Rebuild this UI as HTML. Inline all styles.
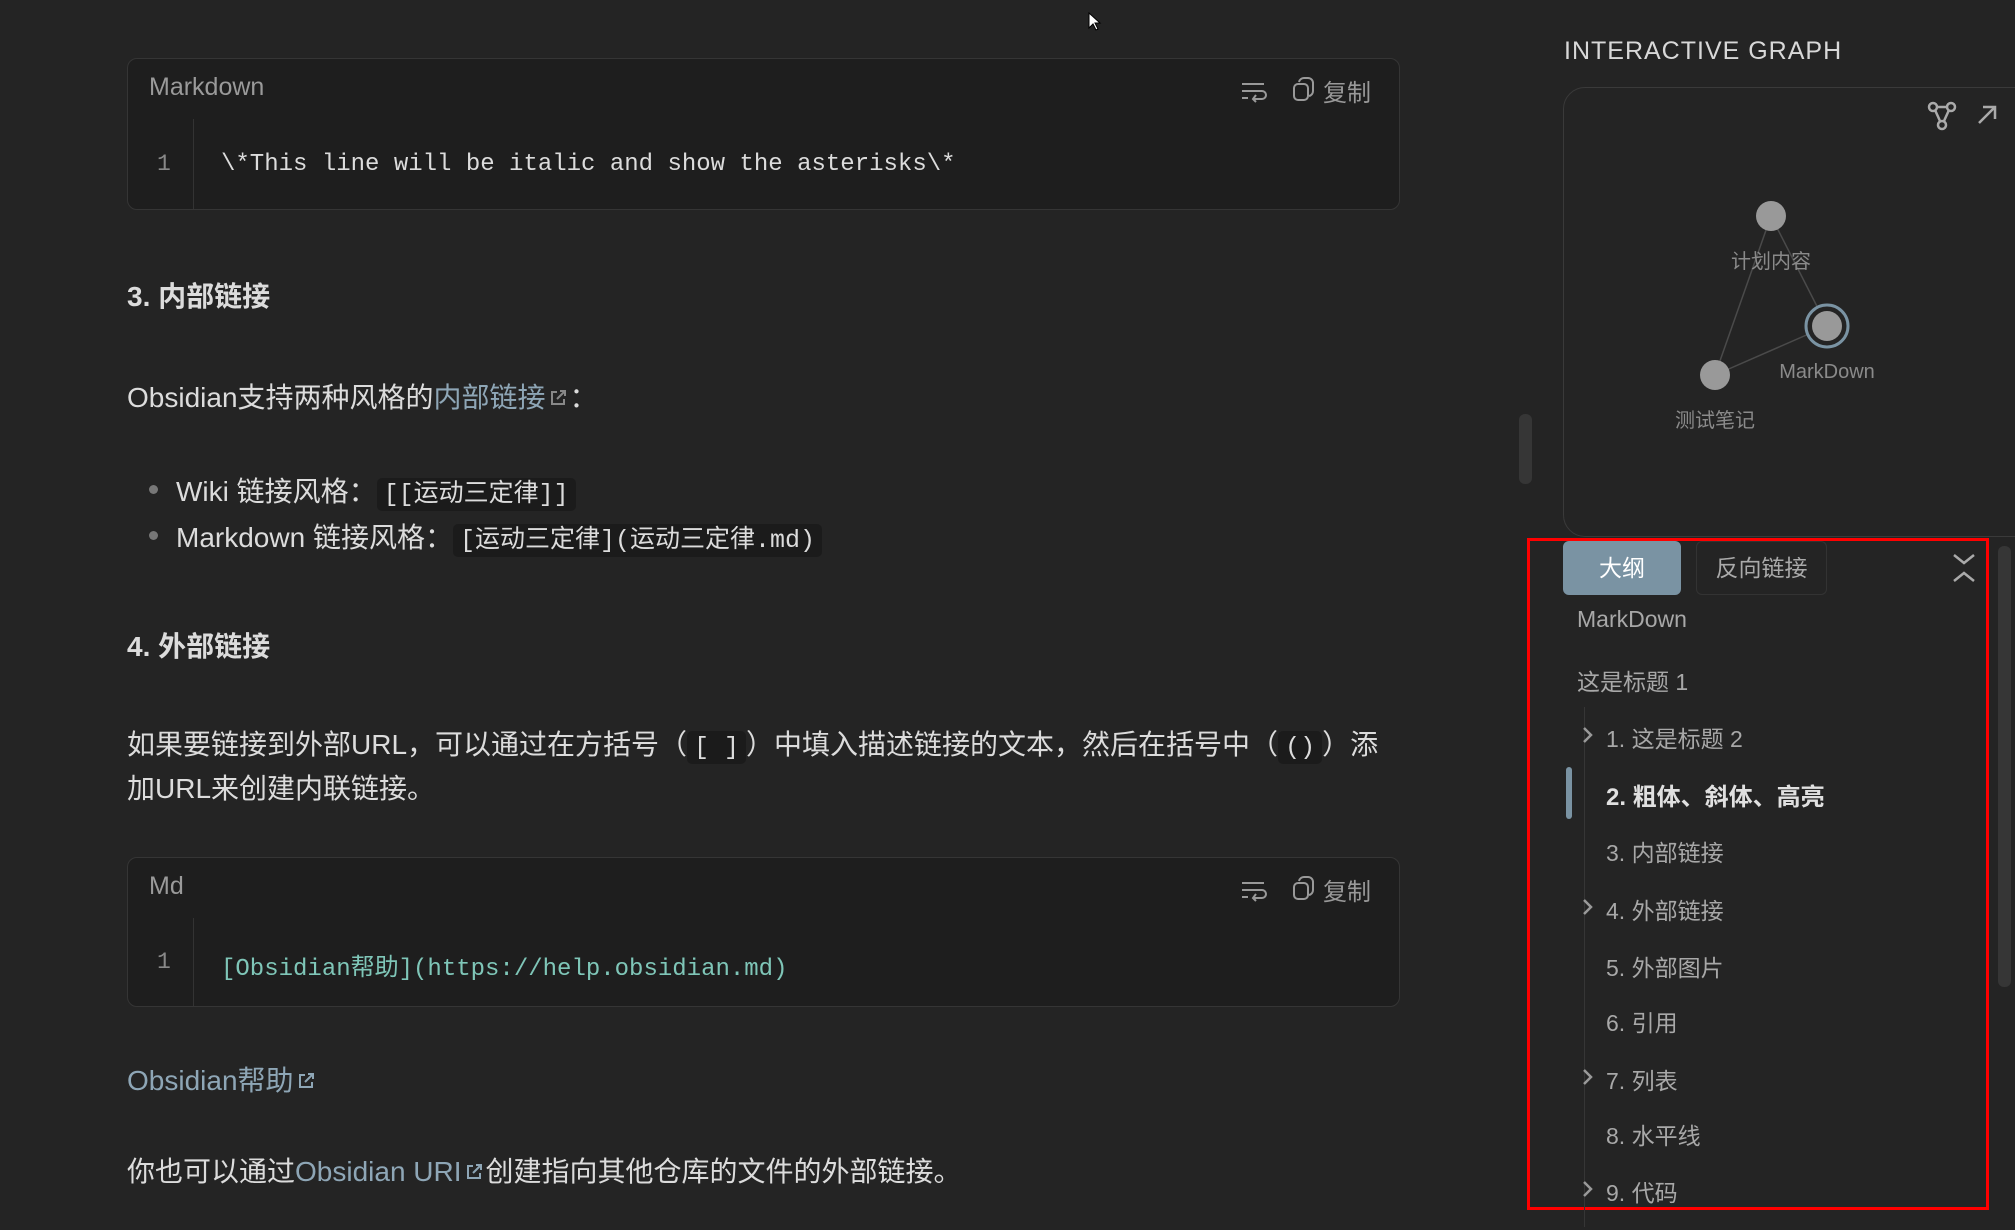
<!DOCTYPE html>
<html><head><meta charset="utf-8"><style>
*{margin:0;padding:0;box-sizing:border-box}
body{width:2015px;height:1230px;background:#242424;overflow:hidden;position:relative;font-family:"Liberation Sans","Noto Sans CJK SC",sans-serif;color:#dadada}
.a{position:absolute;white-space:nowrap}
.code{position:absolute;left:127px;width:1273px;background:#1e1e1e;border:1px solid #353535;border-radius:10px}
.lang{position:absolute;left:21px;font-size:25px;color:#9a9a9a}
.gut{position:absolute;left:65px;top:60px;bottom:0;border-left:1px solid #333}
.ln{position:absolute;left:29px;font-family:"Liberation Mono",monospace;font-size:23px;color:#888}
.ct{position:absolute;left:93px;font-family:"Liberation Mono","Noto Sans CJK SC",monospace;font-size:24px;color:#dcdcdc}
.cp{position:absolute;right:28px;font-size:24px;color:#999}
.body{font-size:28px;color:#dcdcdc}
.h{font-size:28px;font-weight:bold;color:#dcdcdc}
.lk{color:#8ea6b6}
.ic-code{background:#1b1b1b;font-family:"Liberation Mono","Noto Sans CJK SC",monospace;font-size:25px;padding:2px 7px;border-radius:5px}
.ol{position:absolute;font-size:23px;color:#a8a8a8;white-space:nowrap}
.chev{position:absolute;left:1581px}
</style></head><body>
<svg width="0" height="0" style="position:absolute"><defs><symbol id="ext" viewBox="0 0 20 20"><path d="M9 4H4v12h12v-5M12 3h5v5M17 3l-8 8" fill="none" stroke="currentColor" stroke-width="2"/></symbol><symbol id="chv" viewBox="0 0 14 20"><path d="M3 3l7 7-7 7" fill="none" stroke="#999" stroke-width="2.5"/></symbol></defs></svg>

<div class="code" style="top:58px;height:152px">
<div class="lang" style="top:14px">Markdown</div>
<svg class="a" style="left:1112px;top:20px" width="28" height="24" viewBox="0 0 28 24" fill="none" stroke="#999" stroke-width="2"><path d="M2 5h22M2 12h20a4 4 0 0 1 0 8h-8M2 19h6M16 16l-3 4 3 3"/></svg>
<svg class="a" style="left:1163px;top:16px" width="26" height="28" viewBox="0 0 26 28" fill="none" stroke="#999" stroke-width="2"><rect x="3" y="9" width="14" height="16" rx="4"/><path d="M8 7a5 5 0 0 1 5-4h4a5 5 0 0 1 5 5v8a5 5 0 0 1-4 5"/></svg>
<div class="cp" style="top:14px">复制</div>
<div class="gut"></div>
<div class="ln" style="top:92px">1</div>
<div class="ct" style="top:92px">\*This line will be italic and show the asterisks\*</div>
</div>

<div class="a h" style="left:127px;top:275px">3. 内部链接</div>
<div class="a body" style="left:127px;top:376px">Obsidian支持两种风格的<span class="lk">内部链接</span><svg width="20" height="20" style="color:#888;margin:0 2px;vertical-align:-1px"><use href="#ext"/></svg>：</div>
<div class="a" style="left:149px;top:485px;width:9px;height:9px;border-radius:50%;background:#777"></div>
<div class="a body" style="left:176px;top:470px">Wiki 链接风格：<span class="ic-code">[[运动三定律]]</span></div>
<div class="a" style="left:149px;top:531px;width:9px;height:9px;border-radius:50%;background:#777"></div>
<div class="a body" style="left:176px;top:516px">Markdown 链接风格：<span class="ic-code">[运动三定律](运动三定律.md)</span></div>

<div class="a h" style="left:127px;top:625px">4. 外部链接</div>
<div class="a body" style="left:127px;top:724px;line-height:41px">如果要链接到外部URL，可以通过在方括号（<span class="ic-code">[ ]</span>）中填入描述链接的文本，然后在括号中（<span class="ic-code">()</span>）添<br>加URL来创建内联链接。</div>

<div class="code" style="top:857px;height:150px">
<div class="lang" style="top:14px">Md</div>
<svg class="a" style="left:1112px;top:20px" width="28" height="24" viewBox="0 0 28 24" fill="none" stroke="#999" stroke-width="2"><path d="M2 5h22M2 12h20a4 4 0 0 1 0 8h-8M2 19h6M16 16l-3 4 3 3"/></svg>
<svg class="a" style="left:1163px;top:16px" width="26" height="28" viewBox="0 0 26 28" fill="none" stroke="#999" stroke-width="2"><rect x="3" y="9" width="14" height="16" rx="4"/><path d="M8 7a5 5 0 0 1 5-4h4a5 5 0 0 1 5 5v8a5 5 0 0 1-4 5"/></svg>
<div class="cp" style="top:14px">复制</div>
<div class="gut"></div>
<div class="ln" style="top:91px">1</div>
<div class="ct" style="top:89px;color:#7fc6b8">[Obsidian帮助](https://help.obsidian.md)</div>
</div>

<div class="a body lk" style="left:127px;top:1059px">Obsidian帮助<svg width="20" height="20" style="color:#8ea6b6;margin-left:2px;vertical-align:-1px"><use href="#ext"/></svg></div>
<div class="a body" style="left:127px;top:1150px">你也可以通过<span class="lk">Obsidian URI</span><svg width="20" height="20" style="color:#8ea6b6;margin:0 2px;vertical-align:-1px"><use href="#ext"/></svg>创建指向其他仓库的文件的外部链接。</div>

<svg class="a" style="left:1088px;top:12px" width="14" height="20" viewBox="0 0 14 20"><path d="M1 1v15l4-4 3 6 2-1-3-6h5z" fill="#fff" stroke="#000"/></svg>

<!-- right panel -->
<div class="a" style="left:1519px;top:414px;width:13px;height:70px;border-radius:6px;background:#363636"></div>
<div class="a" style="left:1564px;top:37px;font-size:25px;letter-spacing:1px;color:#d8d8d8">INTERACTIVE GRAPH</div>
<div class="a" style="left:1563px;top:87px;width:480px;height:450px;border:1px solid #3a3a3a;border-radius:22px"></div>
<svg class="a" style="left:1926px;top:100px" width="32" height="32" viewBox="0 0 32 32" fill="none" stroke="#aaa" stroke-width="2.5"><circle cx="7" cy="7" r="4"/><circle cx="25" cy="7" r="4"/><circle cx="16" cy="25" r="4"/><path d="M9 10l5 11M23 10l-5 11M11 7h10"/></svg>
<svg class="a" style="left:1976px;top:104px" width="22" height="22" viewBox="0 0 22 22" fill="none" stroke="#aaa" stroke-width="2.5"><path d="M3 19L19 3M7 3h12v12"/></svg>
<svg class="a" style="left:1563px;top:87px" width="452" height="450">
<g stroke="#4a4a4a" stroke-width="1.5"><line x1="208" y1="129" x2="152" y2="288"/><line x1="208" y1="129" x2="264" y2="239"/><line x1="152" y1="288" x2="264" y2="239"/></g>
<circle cx="208" cy="129" r="15" fill="#999"/>
<circle cx="152" cy="288" r="15" fill="#999"/>
<circle cx="264" cy="239" r="21" fill="#242424" stroke="#7a93a3" stroke-width="3"/>
<circle cx="264" cy="239" r="15" fill="#999"/>
<g font-family="Liberation Sans,Noto Sans CJK SC,sans-serif" font-size="20" fill="#8a8a8a" text-anchor="middle"><text x="208" y="181">计划内容</text><text x="264" y="291">MarkDown</text><text x="152" y="340">测试笔记</text></g>
</svg>

<div class="a" style="left:1527px;top:538px;width:462px;height:672px;border:3px solid #f00"></div>
<div class="a" style="left:1998px;top:546px;width:13px;height:441px;border-radius:6px;background:#363636"></div>
<div class="a" style="left:1563px;top:541px;width:118px;height:54px;border-radius:6px;background:#7a93a3;color:#fff;font-size:23px;text-align:center;line-height:54px">大纲</div>
<div class="a" style="left:1696px;top:541px;width:131px;height:54px;border-radius:6px;border:1px solid #333;color:#aaa;font-size:23px;text-align:center;line-height:52px">反向链接</div>
<svg class="a" style="left:1952px;top:553px" width="24" height="30" viewBox="0 0 24 30" fill="none" stroke="#aaa" stroke-width="2.5"><path d="M2 2l10 8 10-8M2 28l10-8 10 8"/></svg>
<div class="a" style="left:1584px;top:707px;width:1px;height:520px;background:#363636"></div>
<div class="a" style="left:1566px;top:767px;width:6px;height:52px;border-radius:3px;background:#7a93a3"></div>
<div class="ol" style="left:1577px;top:606px">MarkDown</div>
<div class="ol" style="left:1577px;top:663px">这是标题 1</div>
<svg class="chev" style="top:725px" width="14" height="20"><use href="#chv"/></svg><div class="ol" style="left:1606px;top:720px">1. 这是标题 2</div>
<div class="ol" style="left:1606px;top:777px;font-weight:bold;color:#e0e0e0;font-size:24px">2. 粗体、斜体、高亮</div>
<div class="ol" style="left:1606px;top:834px">3. 内部链接</div>
<svg class="chev" style="top:897px" width="14" height="20"><use href="#chv"/></svg><div class="ol" style="left:1606px;top:892px">4. 外部链接</div>
<div class="ol" style="left:1606px;top:949px">5. 外部图片</div>
<div class="ol" style="left:1606px;top:1004px">6. 引用</div>
<svg class="chev" style="top:1067px" width="14" height="20"><use href="#chv"/></svg><div class="ol" style="left:1606px;top:1062px">7. 列表</div>
<div class="ol" style="left:1606px;top:1117px">8. 水平线</div>
<svg class="chev" style="top:1179px" width="14" height="20"><use href="#chv"/></svg><div class="ol" style="left:1606px;top:1174px">9. 代码</div>
</body></html>
